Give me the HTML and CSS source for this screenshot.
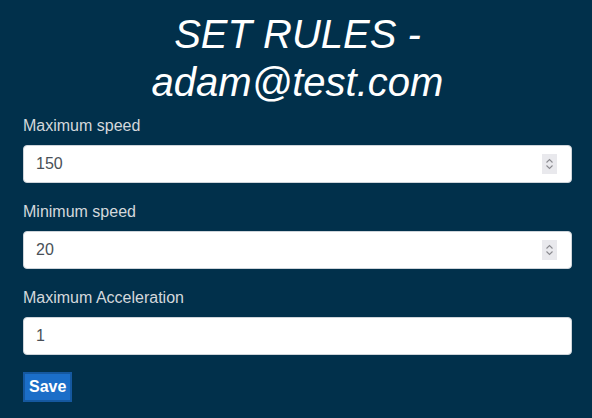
FILE: index.html
```html
<!DOCTYPE html>
<html>
<head>
<meta charset="utf-8">
<link rel="stylesheet" href="styles.css">
</head>
<body>
<main class="page">
  <h1 class="title">SET RULES - adam@test.com</h1>
  <form class="form">
    <div class="group">
      <label class="label" for="maxs">Maximum speed</label>
      <div class="field-wrap">
        <input class="field" id="maxs" type="text" inputmode="numeric" value="150">
        <span class="spin" aria-hidden="true">
          <svg width="15" height="20" viewBox="0 0 15 20"><rect width="15" height="20" fill="#e9e9ed"/><path d="M4.5 8.5 L7.5 5.5 L10.5 8.5" fill="none" stroke="#8a8a8f" stroke-width="1.1"/><path d="M4.5 11.5 L7.5 14.5 L10.5 11.5" fill="none" stroke="#8a8a8f" stroke-width="1.1"/></svg>
        </span>
      </div>
    </div>
    <div class="group">
      <label class="label" for="mins">Minimum speed</label>
      <div class="field-wrap">
        <input class="field" id="mins" type="text" inputmode="numeric" value="20">
        <span class="spin" aria-hidden="true">
          <svg width="15" height="20" viewBox="0 0 15 20"><rect width="15" height="20" fill="#e9e9ed"/><path d="M4.5 8.5 L7.5 5.5 L10.5 8.5" fill="none" stroke="#8a8a8f" stroke-width="1.1"/><path d="M4.5 11.5 L7.5 14.5 L10.5 11.5" fill="none" stroke="#8a8a8f" stroke-width="1.1"/></svg>
        </span>
      </div>
    </div>
    <div class="group">
      <label class="label" for="acc">Maximum Acceleration</label>
      <div class="field-wrap">
        <input class="field" id="acc" type="text" value="1">
      </div>
    </div>
    <button class="save" type="button">Save</button>
  </form>
</main>
</body>
</html>
```
FILE: styles.css
```css
html, body {
  margin: 0;
  padding: 0;
  background: #01304b;
  height: 100%;
}
body {
  font-family: "Liberation Sans", Arial, sans-serif;
}
.page {
  padding: 10px 20px 0 23px;
}
.title {
  margin: 0 0 8px 0;
  padding: 0 40px;
  font-size: 40px;
  line-height: 48px;
  font-weight: normal;
  font-style: italic;
  color: #ffffff;
  text-align: center;
}
.form {
  display: flex;
  flex-direction: column;
  align-items: flex-start;
}
.group {
  display: flex;
  flex-direction: column;
  width: 100%;
  margin-bottom: 17px;
}
.label {
  font-size: 16px;
  line-height: 24px;
  color: #d4d8dc;
  margin-bottom: 7px;
}
.field-wrap {
  position: relative;
  width: 100%;
}
.field {
  display: block;
  box-sizing: border-box;
  width: 100%;
  height: 38px;
  padding: 0 12px;
  border: 1px solid #ced4da;
  border-radius: 4px;
  background: #ffffff;
  font-family: "Liberation Sans", Arial, sans-serif;
  font-size: 16px;
  color: #495057;
  outline: none;
}
.spin {
  position: absolute;
  right: 15px;
  top: 9px;
  width: 15px;
  height: 20px;
  display: block;
  line-height: 0;
}
.save {
  box-sizing: border-box;
  height: 30px;
  padding: 0 4px;
  background: #1b6ec8;
  border: 2px solid #15589f;
  color: #ffffff;
  font-family: "Liberation Sans", Arial, sans-serif;
  font-weight: bold;
  font-size: 16px;
}
```
